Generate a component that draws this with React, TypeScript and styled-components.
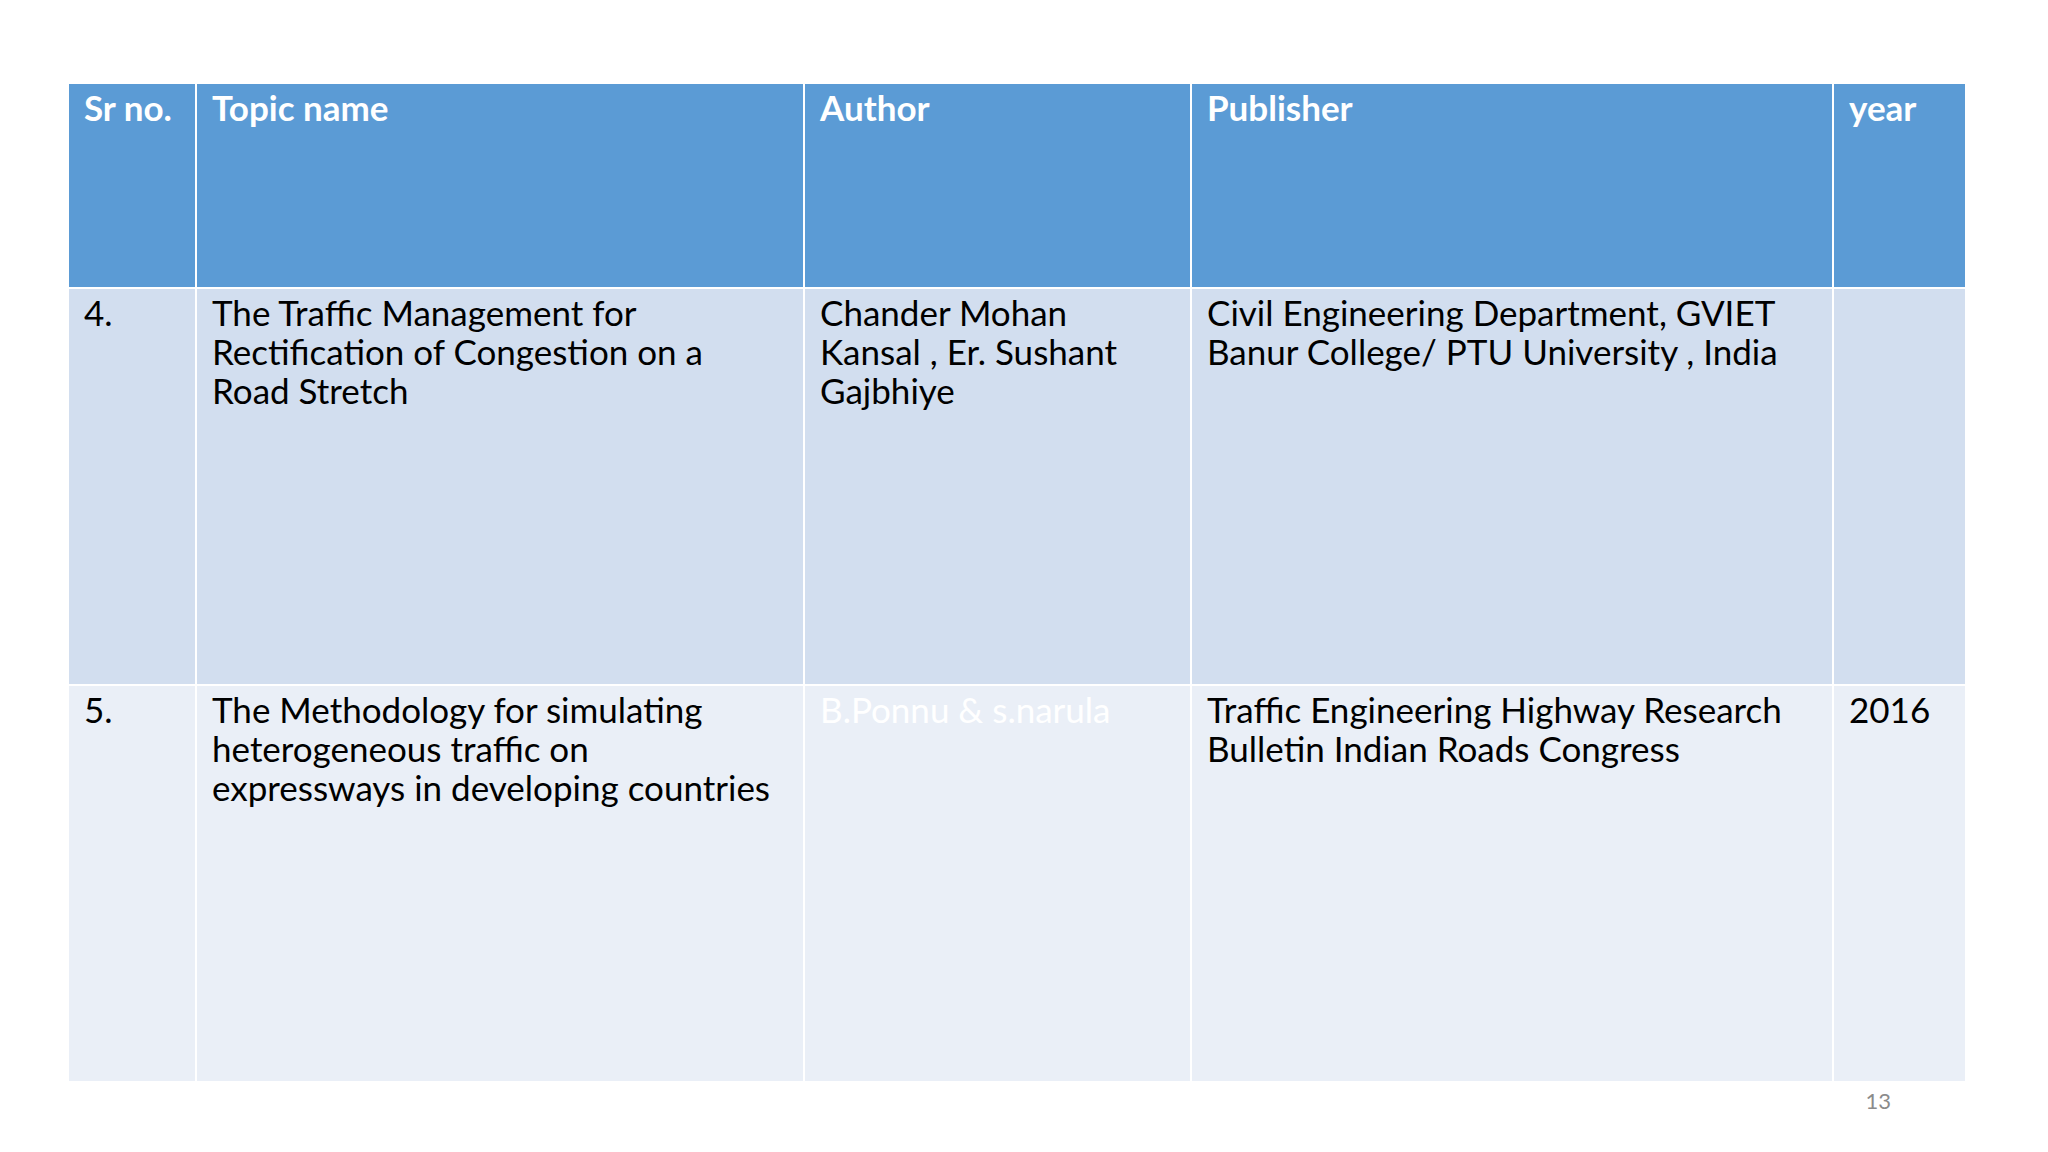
import styled, { createGlobalStyle } from "styled-components";

const GlobalStyle = createGlobalStyle`
  html, body {
    margin: 0;
    padding: 0;
    background: #ffffff;
  }
  body {
    font-family: Lato, "Open Sans", "Liberation Sans", sans-serif;
  }
`;

//Slide Styling Component
const Slide = styled.div`
  width: 2048px;
  height: 1152px;
  padding: 84px 0 0 69px;
  box-sizing: border-box;
  background: #ffffff;
`;

//Table Styling Component
const Table = styled.div`
  display: grid;
  grid-template-columns: 126px 606px 385px 640px 131px;
  grid-template-rows: 203px 395px 395px;
  column-gap: 2px;
  row-gap: 2px;
  width: 1896px;
  background: #ffffff;
`;

//Header Cell Styling Component
const HeadCell = styled.div`
  background: #5b9bd5;
  color: #ffffff;
  font-weight: 700;
  font-size: 35px;
  line-height: 39px;
  padding: 4px 10px 0 15px;
  white-space: nowrap;
`;

//Body Cell Styling Component
const Cell = styled.div<{ $band: "dark" | "light"; $faint?: boolean }>`
  background: ${(p) => (p.$band === "dark" ? "#d2deef" : "#eaeff7")};
  color: ${(p) => (p.$faint ? "#ffffff" : "#000000")};
  font-size: 35px;
  line-height: 39px;
  padding: 4px 10px 0 15px;
  white-space: nowrap;
`;

//Footer Styling Component
const Footer = styled.div`
  width: 1896px;
  display: flex;
  justify-content: flex-end;
  padding-right: 74px;
  box-sizing: border-box;
  margin-top: 6px;
  font-size: 22px;
  color: #8b8b8b;
`;

const headers = ["Sr no.", "Topic name", "Author", "Publisher", "year"];

const rows: { band: "dark" | "light"; cells: string[][]; faint?: number }[] = [
  {
    band: "dark",
    cells: [
      ["4."],
      ["The Traffic Management for", "Rectification of Congestion on a", "Road Stretch"],
      ["Chander Mohan", "Kansal , Er. Sushant", "Gajbhiye"],
      ["Civil Engineering Department, GVIET", "Banur College/ PTU University , India"],
      [""],
    ],
  },
  {
    band: "light",
    faint: 2,
    cells: [
      ["5."],
      ["The Methodology for simulating", "heterogeneous traffic on", "expressways in developing countries"],
      ["B.Ponnu & s.narula"],
      ["Traffic Engineering Highway Research", "Bulletin Indian Roads Congress"],
      ["2016"],
    ],
  },
];

const App = () => {
  return (
    <>
      <GlobalStyle />
      <Slide>
        <Table>
          {headers.map((h) => (
            <HeadCell key={h}>{h}</HeadCell>
          ))}
          {rows.map((row, r) =>
            row.cells.map((lines, c) => (
              <Cell key={`${r}-${c}`} $band={row.band} $faint={row.faint === c}>
                {lines.map((line, i) => (
                  <div key={i}>{line}</div>
                ))}
              </Cell>
            ))
          )}
        </Table>
        <Footer>13</Footer>
      </Slide>
    </>
  );
};

export default App;
